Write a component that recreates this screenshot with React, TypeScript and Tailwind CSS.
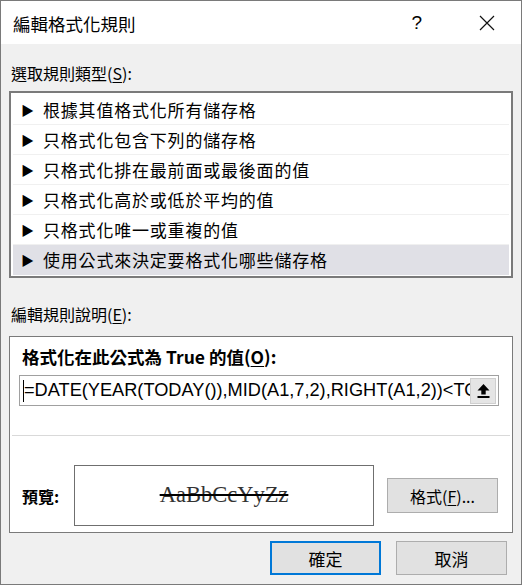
const cjk = { fontFamily: '"Noto Sans CJK TC", "Noto Sans", sans-serif' };

const rules = [
  "根據其值格式化所有儲存格",
  "只格式化包含下列的儲存格",
  "只格式化排在最前面或最後面的值",
  "只格式化高於或低於平均的值",
  "只格式化唯一或重複的值",
  "使用公式來決定要格式化哪些儲存格",
];

function CollapseIcon() {
  return (
    <svg width="13" height="15" viewBox="0 0 13 15" fill="#000">
      <path d="M6.5 1 L12.5 7.5 L8.7 7.5 L8.7 11.5 L4.3 11.5 L4.3 7.5 L0.5 7.5 Z" />
      <rect x="0.5" y="13" width="12" height="2" />
    </svg>
  );
}

export default function App() {
  return (
    <div className="w-[523px] h-[585px] bg-white text-black" style={cjk}>
      <div className="w-[522px] h-[585px] border border-[#7a7a7a] bg-[#f0f0f0] flex flex-col">
        {/* title bar */}
        <div className="h-[43px] bg-white flex items-center shrink-0">
          <span className="ml-[12px] text-[17.5px] leading-none mt-[2px]">編輯格式化規則</span>
          <span className="ml-auto mr-[57px] text-[19px] leading-none font-light" style={{ fontFamily: '"Liberation Sans", sans-serif' }}>?</span>
          <svg width="16" height="16" viewBox="0 0 16 16" className="mr-[26px]" stroke="#111" strokeWidth="1.2">
            <path d="M1 1 L15 15 M15 1 L1 15" />
          </svg>
        </div>

        <div className="mt-[19px] ml-[10px] text-[16px] leading-[20px]">
          選取規則類型(<span className="underline underline-offset-2">S</span>):
        </div>

        {/* rule type list */}
        <div className="mt-[8px] ml-[8px] w-[504px] h-[187px] border-2 border-[#7a7a7a] bg-white p-[2px]">
          {rules.map((r, i) => (
            <div
              key={i}
              className={
                "h-[30px] flex items-center border-b border-[#f0f0f0] " +
                (i === rules.length - 1 ? "bg-[#e0e0e6] border-transparent" : "")
              }
            >
              <span className="ml-[8px] text-[13px] leading-none">▶</span>
              <span className="ml-[9px] text-[17px] tracking-[0.8px] leading-none">{r}</span>
            </div>
          ))}
        </div>

        <div className="mt-[26px] ml-[10px] text-[16px] leading-[20px]">
          編輯規則說明(<span className="underline underline-offset-2">E</span>):
        </div>

        {/* description panel */}
        <div className="mt-[12px] ml-[8px] w-[504px] h-[197px] border border-[#7a7a7a] bg-white flex flex-col">
          <div className="mt-[10px] ml-[12px] text-[17.5px] font-bold leading-[20px]">
            格式化在此公式為 True 的值(<span className="underline underline-offset-2">O</span>):
          </div>
          <div className="mt-[8px] ml-[9px] w-[480px] h-[31px] border border-[#a0a0a0] flex items-center">
            <div className="relative flex-1 h-full overflow-hidden flex items-center">
              <div className="absolute left-[3px] top-[4px] w-px h-[22px] bg-black" />
              <span
                className="ml-[4px] whitespace-nowrap text-[18.2px] leading-none"
                style={{ fontFamily: '"Liberation Sans", Arial, sans-serif' }}
              >
                =DATE(YEAR(TODAY()),MID(A1,7,2),RIGHT(A1,2))&lt;TODAY()
              </span>
            </div>
            <div className="w-[26px] h-[26px] mr-[2px] bg-[#e5e5e5] border border-[#cfcfcf] flex items-center justify-center">
              <CollapseIcon />
            </div>
          </div>
          <div className="mt-[29px] ml-[2px] w-[498px] h-px bg-[#d9d9d9]" />
          <div className="mt-[29px] flex items-center">
            <span className="ml-[12px] w-[52px] text-[16px] font-bold leading-none">預覽:</span>
            <div className="w-[300px] h-[61px] border border-[#6f6f6f] flex items-center justify-center">
              <span
                className="text-[22.5px] leading-none line-through decoration-black text-[#333]"
                style={{ fontFamily: '"Liberation Serif", "Times New Roman", serif' }}
              >
                AaBbCcYyZz
              </span>
            </div>
            <button className="ml-[13px] w-[111px] h-[35px] bg-[#e1e1e1] border border-[#adadad] text-[16px] leading-none">
              格式(<span className="underline underline-offset-2">F</span>)...
            </button>
          </div>
        </div>

        {/* dialog buttons */}
        <div className="mt-[8px] ml-[269px] flex gap-[15px]">
          <button className="w-[111px] h-[34px] bg-[#e1e1e1] border-2 border-[#0078d7] text-[17px] leading-none">確定</button>
          <button className="w-[111px] h-[34px] bg-[#e1e1e1] border border-[#adadad] text-[17px] leading-none">取消</button>
        </div>
      </div>
    </div>
  );
}
